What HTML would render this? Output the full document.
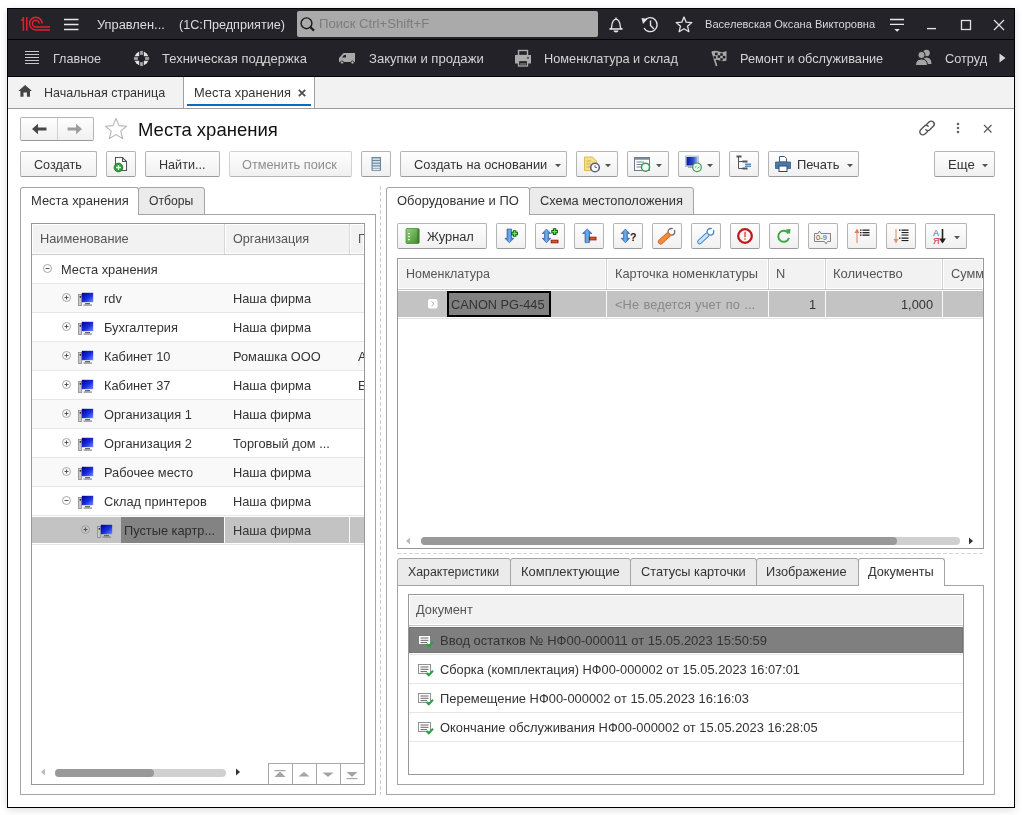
<!DOCTYPE html>
<html><head><meta charset="utf-8"><style>
html,body{margin:0;padding:0;width:1022px;height:815px;overflow:hidden;background:#fff;font-family:"Liberation Sans", sans-serif;}
div{position:absolute;box-sizing:border-box;}
.t{line-height:1;white-space:nowrap;will-change:transform;}
</style></head><body>
<div style="left:7px;top:8px;width:1008px;height:800px;border:1px solid #000;background:#fff;box-shadow:0 2px 8px rgba(0,0,0,0.13)"></div>
<div style="left:8px;top:9px;width:1006px;height:30px;background:#242329"></div>
<div style="left:8px;top:39px;width:1006px;height:1px;background:#050408"></div>
<div style="left:8px;top:40px;width:1006px;height:36px;background:#232228"></div>
<div style="left:8px;top:76px;width:1006px;height:1px;background:#050408"></div>
<div style="left:8px;top:77px;width:1006px;height:31px;background:#f2f2f2"></div>
<div style="left:8px;top:108px;width:1006px;height:1px;background:#9c9c9c"></div>
<div class="t" style="left:97px;top:19.00px;font-size:12.85px;color:#dcdcdc;">Управлен...</div>
<div class="t" style="left:179px;top:19.00px;font-size:12.65px;color:#dcdcdc;">(1С:Предприятие)</div>
<div style="left:297px;top:11px;width:301px;height:26px;background:#aaaaaa;border-radius:2px"></div>
<div class="t" style="left:319px;top:17.00px;font-size:13.15px;color:#7c7c7c;">Поиск Ctrl+Shift+F</div>
<div class="t" style="left:705px;top:19.00px;font-size:11.1px;color:#d8d8d8;">Васелевская Оксана Викторовна</div>
<div class="t" style="left:53px;top:53.00px;font-size:12.6px;color:#d4d4d4;">Главное</div>
<div class="t" style="left:162px;top:52.00px;font-size:13px;color:#d4d4d4;">Техническая поддержка</div>
<div class="t" style="left:369px;top:52.00px;font-size:13.1px;color:#d4d4d4;">Закупки и продажи</div>
<div class="t" style="left:544px;top:53.00px;font-size:12.75px;color:#d4d4d4;">Номенклатура и склад</div>
<div class="t" style="left:740px;top:53.00px;font-size:12.75px;color:#d4d4d4;">Ремонт и обслуживание</div>
<div class="t" style="left:945px;top:53.00px;font-size:12.75px;color:#d4d4d4;">Сотруд</div>
<div style="left:183px;top:77px;width:1px;height:31px;background:#a0a0a0"></div>
<div style="left:184px;top:77px;width:130px;height:31px;background:#fff"></div>
<div style="left:314px;top:77px;width:1px;height:31px;background:#a0a0a0"></div>
<div style="left:187px;top:104px;width:124px;height:2px;background:#0b6cbf"></div>
<div class="t" style="left:44px;top:87.00px;font-size:12.53px;color:#333;">Начальная страница</div>
<div class="t" style="left:194px;top:87.00px;font-size:12.84px;color:#333;">Места хранения</div>
<div style="left:20px;top:117px;width:74px;height:24px;border:1px solid #b4b4b4;border-bottom-color:#9a9a9a;border-radius:2px;background:linear-gradient(#fefefe,#f0f0f0);"></div>
<div style="left:57px;top:118px;width:1px;height:22px;background:#d0d0d0"></div>
<div class="t" style="left:138px;top:121.00px;font-size:18.5px;color:#111;">Места хранения</div>
<div style="left:20px;top:151px;width:77px;height:26px;border:1px solid #b4b4b4;border-bottom-color:#9a9a9a;border-radius:2px;background:linear-gradient(#fefefe,#f0f0f0);"></div>
<div class="t" style="left:34px;top:159.00px;font-size:12.6px;color:#333;">Создать</div>
<div style="left:106px;top:151px;width:30px;height:26px;border:1px solid #b4b4b4;border-bottom-color:#9a9a9a;border-radius:2px;background:linear-gradient(#fefefe,#f0f0f0);"></div>
<div style="left:145px;top:151px;width:75px;height:26px;border:1px solid #b4b4b4;border-bottom-color:#9a9a9a;border-radius:2px;background:linear-gradient(#fefefe,#f0f0f0);"></div>
<div class="t" style="left:159px;top:159.00px;font-size:12.6px;color:#333;">Найти...</div>
<div style="left:229px;top:151px;width:123px;height:26px;border:1px solid #b4b4b4;border-bottom-color:#9a9a9a;border-radius:2px;background:linear-gradient(#fefefe,#f0f0f0);border-color:#d2d2d2;border-bottom-color:#b4b4b4;"></div>
<div class="t" style="left:242px;top:159.00px;font-size:12.75px;color:#8e8e8e;">Отменить поиск</div>
<div style="left:361px;top:151px;width:30px;height:26px;border:1px solid #b4b4b4;border-bottom-color:#9a9a9a;border-radius:2px;background:linear-gradient(#fefefe,#f0f0f0);"></div>
<div style="left:400px;top:151px;width:167px;height:26px;border:1px solid #b4b4b4;border-bottom-color:#9a9a9a;border-radius:2px;background:linear-gradient(#fefefe,#f0f0f0);"></div>
<div class="t" style="left:414px;top:159.00px;font-size:12.85px;color:#333;">Создать на основании</div>
<svg style="position:absolute;left:555px;top:164px;" width="6" height="4" viewBox="0 0 6 4"><path d="M0 0H6L3 3.2Z" fill="#555"/></svg>
<div style="left:576px;top:151px;width:42px;height:26px;border:1px solid #b4b4b4;border-bottom-color:#9a9a9a;border-radius:2px;background:linear-gradient(#fefefe,#f0f0f0);"></div>
<svg style="position:absolute;left:605px;top:164px;" width="6" height="4" viewBox="0 0 6 4"><path d="M0 0H6L3 3.2Z" fill="#555"/></svg>
<div style="left:627px;top:151px;width:42px;height:26px;border:1px solid #b4b4b4;border-bottom-color:#9a9a9a;border-radius:2px;background:linear-gradient(#fefefe,#f0f0f0);"></div>
<svg style="position:absolute;left:656px;top:164px;" width="6" height="4" viewBox="0 0 6 4"><path d="M0 0H6L3 3.2Z" fill="#555"/></svg>
<div style="left:678px;top:151px;width:42px;height:26px;border:1px solid #b4b4b4;border-bottom-color:#9a9a9a;border-radius:2px;background:linear-gradient(#fefefe,#f0f0f0);"></div>
<svg style="position:absolute;left:707px;top:164px;" width="6" height="4" viewBox="0 0 6 4"><path d="M0 0H6L3 3.2Z" fill="#555"/></svg>
<div style="left:729px;top:151px;width:30px;height:26px;border:1px solid #b4b4b4;border-bottom-color:#9a9a9a;border-radius:2px;background:linear-gradient(#fefefe,#f0f0f0);"></div>
<div style="left:768px;top:151px;width:91px;height:26px;border:1px solid #b4b4b4;border-bottom-color:#9a9a9a;border-radius:2px;background:linear-gradient(#fefefe,#f0f0f0);"></div>
<div class="t" style="left:797px;top:159.00px;font-size:12.95px;color:#333;">Печать</div>
<svg style="position:absolute;left:847px;top:164px;" width="6" height="4" viewBox="0 0 6 4"><path d="M0 0H6L3 3.2Z" fill="#555"/></svg>
<div style="left:934px;top:151px;width:61px;height:26px;border:1px solid #b4b4b4;border-bottom-color:#9a9a9a;border-radius:2px;background:linear-gradient(#fefefe,#f0f0f0);"></div>
<div class="t" style="left:948px;top:158.00px;font-size:13.2px;color:#333;">Еще</div>
<svg style="position:absolute;left:982px;top:164px;" width="6" height="4" viewBox="0 0 6 4"><path d="M0 0H6L3 3.2Z" fill="#555"/></svg>
<div style="left:20px;top:214px;width:356px;height:581px;border:1px solid #a4a4a4;background:#fff"></div>
<div style="left:20px;top:187px;width:119px;height:28px;border:1px solid #a4a4a4;border-bottom:none;border-radius:3px 3px 0 0;background:#fff"></div>
<div style="left:138px;top:187px;width:67px;height:28px;border:1px solid #a4a4a4;border-radius:3px 3px 0 0;background:#ebebeb"></div>
<div class="t" style="left:31px;top:195.00px;font-size:12.95px;color:#333;">Места хранения</div>
<div class="t" style="left:149px;top:195.00px;font-size:12.2px;color:#333;">Отборы</div>
<div style="left:31px;top:223px;width:334px;height:562px;border:1px solid #989898;background:#fff"></div>
<div style="left:33px;top:225px;width:330px;height:28px;background:#f2f2f2"></div>
<div style="left:32px;top:254px;width:332px;height:1px;background:#c8c8c8"></div>
<div style="left:224px;top:224px;width:1px;height:30px;background:#d8d8d8"></div>
<div style="left:225px;top:224px;width:1px;height:30px;background:#fff"></div>
<div style="left:349px;top:224px;width:1px;height:30px;background:#d8d8d8"></div>
<div style="left:350px;top:224px;width:1px;height:30px;background:#fff"></div>
<div class="t" style="left:40px;top:233.00px;font-size:12.8px;color:#555;">Наименование</div>
<div class="t" style="left:233px;top:233.00px;font-size:12.62px;color:#555;">Организация</div>
<div class="t" style="left:358px;top:233.00px;font-size:12.5px;color:#555;width:6px;overflow:hidden;padding-bottom:4px;">Г</div>
<div style="left:32px;top:283px;width:332px;height:1px;background:#e6e6e6"></div>
<div class="t" style="left:61px;top:264.00px;font-size:12.8px;color:#333;">Места хранения</div>
<div style="left:32px;top:284px;width:332px;height:28px;background:#f9f9f9"></div>
<div style="left:32px;top:312px;width:332px;height:1px;background:#e6e6e6"></div>
<div class="t" style="left:104px;top:293.00px;font-size:12.8px;color:#333;">rdv</div>
<div class="t" style="left:233px;top:293.00px;font-size:12.8px;color:#333;">Наша фирма</div>
<div style="left:32px;top:341px;width:332px;height:1px;background:#e6e6e6"></div>
<div class="t" style="left:104px;top:322.00px;font-size:12.8px;color:#333;">Бухгалтерия</div>
<div class="t" style="left:233px;top:322.00px;font-size:12.8px;color:#333;">Наша фирма</div>
<div style="left:32px;top:342px;width:332px;height:28px;background:#f9f9f9"></div>
<div style="left:32px;top:370px;width:332px;height:1px;background:#e6e6e6"></div>
<div class="t" style="left:104px;top:351.00px;font-size:12.8px;color:#333;">Кабинет 10</div>
<div class="t" style="left:233px;top:351.00px;font-size:12.8px;color:#333;">Ромашка ООО</div>
<div class="t" style="left:358px;top:351.00px;font-size:12.8px;color:#333;width:6px;overflow:hidden;padding-bottom:4px;">А</div>
<div style="left:32px;top:399px;width:332px;height:1px;background:#e6e6e6"></div>
<div class="t" style="left:104px;top:380.00px;font-size:12.8px;color:#333;">Кабинет 37</div>
<div class="t" style="left:233px;top:380.00px;font-size:12.8px;color:#333;">Наша фирма</div>
<div class="t" style="left:358px;top:380.00px;font-size:12.8px;color:#333;width:6px;overflow:hidden;padding-bottom:4px;">Б</div>
<div style="left:32px;top:400px;width:332px;height:28px;background:#f9f9f9"></div>
<div style="left:32px;top:428px;width:332px;height:1px;background:#e6e6e6"></div>
<div class="t" style="left:104px;top:409.00px;font-size:12.8px;color:#333;">Организация 1</div>
<div class="t" style="left:233px;top:409.00px;font-size:12.8px;color:#333;">Наша фирма</div>
<div style="left:32px;top:457px;width:332px;height:1px;background:#e6e6e6"></div>
<div class="t" style="left:104px;top:438.00px;font-size:12.8px;color:#333;">Организация 2</div>
<div class="t" style="left:233px;top:438.00px;font-size:12.8px;color:#333;">Торговый дом ...</div>
<div style="left:32px;top:458px;width:332px;height:28px;background:#f9f9f9"></div>
<div style="left:32px;top:486px;width:332px;height:1px;background:#e6e6e6"></div>
<div class="t" style="left:104px;top:467.00px;font-size:12.8px;color:#333;">Рабочее место</div>
<div class="t" style="left:233px;top:467.00px;font-size:12.8px;color:#333;">Наша фирма</div>
<div style="left:32px;top:515px;width:332px;height:1px;background:#e6e6e6"></div>
<div class="t" style="left:104px;top:496.00px;font-size:12.8px;color:#333;">Склад принтеров</div>
<div class="t" style="left:233px;top:496.00px;font-size:12.8px;color:#333;">Наша фирма</div>
<div style="left:32px;top:517px;width:332px;height:26px;background:#c3c3c3"></div>
<div style="left:121px;top:517px;width:103px;height:26px;background:#838383"></div>
<div style="left:224px;top:517px;width:1px;height:26px;background:#fafafa"></div>
<div style="left:349px;top:517px;width:1px;height:26px;background:#fafafa"></div>
<div style="left:32px;top:544px;width:332px;height:1px;background:#e6e6e6"></div>
<div class="t" style="left:124px;top:525.00px;font-size:12.8px;color:#2e2e2e;">Пустые картр...</div>
<div class="t" style="left:233px;top:525.00px;font-size:12.8px;color:#333;">Наша фирма</div>
<div style="left:55px;top:769px;width:171px;height:8px;background:#d0d0d0;border-radius:4px"></div>
<div style="left:55px;top:769px;width:99px;height:8px;background:#999;border-radius:4px"></div>
<div style="left:268px;top:763px;width:97px;height:22px;border:1px solid #a8a8a8;border-bottom:none"></div>
<div style="left:292px;top:764px;width:1px;height:21px;background:#a8a8a8"></div>
<div style="left:316px;top:764px;width:1px;height:21px;background:#a8a8a8"></div>
<div style="left:340px;top:764px;width:1px;height:21px;background:#a8a8a8"></div>
<div style="left:380px;top:186px;width:1px;height:609px;background:repeating-linear-gradient(#cdcdcd 0 4px,transparent 4px 6px)"></div>
<div style="left:386px;top:214px;width:609px;height:581px;border:1px solid #a4a4a4;background:#fff"></div>
<div style="left:386px;top:187px;width:144px;height:28px;border:1px solid #a4a4a4;border-bottom:none;border-radius:3px 3px 0 0;background:#fff"></div>
<div style="left:529px;top:187px;width:165px;height:28px;border:1px solid #a4a4a4;border-radius:3px 3px 0 0;background:#ebebeb"></div>
<div class="t" style="left:397px;top:195.00px;font-size:12.95px;color:#333;">Оборудование и ПО</div>
<div class="t" style="left:540px;top:195.00px;font-size:12.85px;color:#333;">Схема местоположения</div>
<div style="left:397px;top:223px;width:90px;height:26px;border:1px solid #b4b4b4;border-bottom-color:#9a9a9a;border-radius:2px;background:linear-gradient(#fefefe,#f0f0f0);"></div>
<div class="t" style="left:427px;top:231.00px;font-size:12.85px;color:#333;">Журнал</div>
<div style="left:496px;top:223px;width:30px;height:26px;border:1px solid #b4b4b4;border-bottom-color:#9a9a9a;border-radius:2px;background:linear-gradient(#fefefe,#f0f0f0);"></div>
<div style="left:535px;top:223px;width:30px;height:26px;border:1px solid #b4b4b4;border-bottom-color:#9a9a9a;border-radius:2px;background:linear-gradient(#fefefe,#f0f0f0);"></div>
<div style="left:574px;top:223px;width:30px;height:26px;border:1px solid #b4b4b4;border-bottom-color:#9a9a9a;border-radius:2px;background:linear-gradient(#fefefe,#f0f0f0);"></div>
<div style="left:613px;top:223px;width:30px;height:26px;border:1px solid #b4b4b4;border-bottom-color:#9a9a9a;border-radius:2px;background:linear-gradient(#fefefe,#f0f0f0);"></div>
<div style="left:652px;top:223px;width:30px;height:26px;border:1px solid #b4b4b4;border-bottom-color:#9a9a9a;border-radius:2px;background:linear-gradient(#fefefe,#f0f0f0);"></div>
<div style="left:691px;top:223px;width:30px;height:26px;border:1px solid #b4b4b4;border-bottom-color:#9a9a9a;border-radius:2px;background:linear-gradient(#fefefe,#f0f0f0);"></div>
<div style="left:730px;top:223px;width:30px;height:26px;border:1px solid #b4b4b4;border-bottom-color:#9a9a9a;border-radius:2px;background:linear-gradient(#fefefe,#f0f0f0);"></div>
<div style="left:769px;top:223px;width:30px;height:26px;border:1px solid #b4b4b4;border-bottom-color:#9a9a9a;border-radius:2px;background:linear-gradient(#fefefe,#f0f0f0);"></div>
<div style="left:808px;top:223px;width:30px;height:26px;border:1px solid #b4b4b4;border-bottom-color:#9a9a9a;border-radius:2px;background:linear-gradient(#fefefe,#f0f0f0);"></div>
<div style="left:847px;top:223px;width:30px;height:26px;border:1px solid #b4b4b4;border-bottom-color:#9a9a9a;border-radius:2px;background:linear-gradient(#fefefe,#f0f0f0);"></div>
<div style="left:886px;top:223px;width:30px;height:26px;border:1px solid #b4b4b4;border-bottom-color:#9a9a9a;border-radius:2px;background:linear-gradient(#fefefe,#f0f0f0);"></div>
<div style="left:925px;top:223px;width:42px;height:26px;border:1px solid #b4b4b4;border-bottom-color:#9a9a9a;border-radius:2px;background:linear-gradient(#fefefe,#f0f0f0);"></div>
<svg style="position:absolute;left:954px;top:236px;" width="6" height="4" viewBox="0 0 6 4"><path d="M0 0H6L3 3.2Z" fill="#555"/></svg>
<div style="left:397px;top:258px;width:587px;height:291px;border:1px solid #989898;background:#fff"></div>
<div style="left:399px;top:260px;width:583px;height:28px;background:#f2f2f2"></div>
<div style="left:398px;top:289px;width:585px;height:1px;background:#c8c8c8"></div>
<div style="left:605px;top:259px;width:1px;height:30px;background:#fff"></div>
<div style="left:606px;top:259px;width:1px;height:30px;background:#d0d0d0"></div>
<div style="left:607px;top:259px;width:1px;height:30px;background:#fff"></div>
<div style="left:767px;top:259px;width:1px;height:30px;background:#fff"></div>
<div style="left:768px;top:259px;width:1px;height:30px;background:#d0d0d0"></div>
<div style="left:769px;top:259px;width:1px;height:30px;background:#fff"></div>
<div style="left:824px;top:259px;width:1px;height:30px;background:#fff"></div>
<div style="left:825px;top:259px;width:1px;height:30px;background:#d0d0d0"></div>
<div style="left:826px;top:259px;width:1px;height:30px;background:#fff"></div>
<div style="left:941px;top:259px;width:1px;height:30px;background:#fff"></div>
<div style="left:942px;top:259px;width:1px;height:30px;background:#d0d0d0"></div>
<div style="left:943px;top:259px;width:1px;height:30px;background:#fff"></div>
<div style="left:398px;top:318px;width:585px;height:1px;background:#e4e4e4"></div>
<div class="t" style="left:406px;top:268.00px;font-size:12.5px;color:#555;">Номенклатура</div>
<div class="t" style="left:615px;top:268.00px;font-size:12.8px;color:#555;">Карточка номенклатуры</div>
<div class="t" style="left:776px;top:268.00px;font-size:12.8px;color:#555;">N</div>
<div class="t" style="left:833px;top:267.00px;font-size:13.0px;color:#555;">Количество</div>
<div class="t" style="left:951px;top:268.00px;font-size:12.8px;color:#555;width:32px;overflow:hidden;padding-bottom:4px;">Сумм</div>
<div style="left:398px;top:291px;width:585px;height:26px;background:#c3c3c3"></div>
<div style="left:606px;top:291px;width:1px;height:26px;background:#fafafa"></div>
<div style="left:768px;top:291px;width:1px;height:26px;background:#fafafa"></div>
<div style="left:825px;top:291px;width:1px;height:26px;background:#fafafa"></div>
<div style="left:942px;top:291px;width:1px;height:26px;background:#fafafa"></div>
<div style="left:447px;top:291px;width:104px;height:26px;border:2px solid #000;background:#818181"></div>
<div class="t" style="left:451px;top:299.00px;font-size:12.75px;color:#333;">CANON PG-445</div>
<div class="t" style="left:615px;top:299.00px;font-size:12.8px;color:#888;word-spacing:0.6px;letter-spacing:0.12px;">&lt;Не ведется учет по ...</div>
<div class="t" style="right:206px;top:299.00px;font-size:12.8px;color:#333;">1</div>
<div class="t" style="right:89px;top:299.00px;font-size:12.8px;color:#333;">1,000</div>
<div style="left:421px;top:537px;width:539px;height:8px;background:#d0d0d0;border-radius:4px"></div>
<div style="left:421px;top:537px;width:476px;height:8px;background:#999;border-radius:4px"></div>
<div style="left:397px;top:553px;width:586px;height:1px;background:repeating-linear-gradient(90deg,#d4d4d4 0 4px,transparent 4px 6px)"></div>
<div style="left:397px;top:585px;width:587px;height:200px;border:1px solid #a4a4a4;background:#fff"></div>
<div style="left:397px;top:558px;width:114px;height:28px;border:1px solid #a4a4a4;border-radius:3px 3px 0 0;background:#ebebeb"></div>
<div class="t" style="left:408px;top:566.00px;font-size:12.3px;color:#333;">Характеристики</div>
<div style="left:510px;top:558px;width:121px;height:28px;border:1px solid #a4a4a4;border-radius:3px 3px 0 0;background:#ebebeb"></div>
<div class="t" style="left:521px;top:566.00px;font-size:12.97px;color:#333;">Комплектующие</div>
<div style="left:630px;top:558px;width:127px;height:28px;border:1px solid #a4a4a4;border-radius:3px 3px 0 0;background:#ebebeb"></div>
<div class="t" style="left:641px;top:566.00px;font-size:12.78px;color:#333;">Статусы карточки</div>
<div style="left:756px;top:558px;width:103px;height:28px;border:1px solid #a4a4a4;border-radius:3px 3px 0 0;background:#ebebeb"></div>
<div class="t" style="left:766px;top:566.00px;font-size:12.8px;color:#333;">Изображение</div>
<div style="left:858px;top:558px;width:87px;height:28px;border:1px solid #a4a4a4;border-bottom:none;border-radius:3px 3px 0 0;background:#fff"></div>
<div class="t" style="left:868px;top:566.00px;font-size:12.75px;color:#333;">Документы</div>
<div style="left:408px;top:594px;width:556px;height:181px;border:1px solid #989898;background:#fff"></div>
<div style="left:410px;top:596px;width:552px;height:28px;background:#f2f2f2"></div>
<div style="left:409px;top:625px;width:554px;height:1px;background:#c8c8c8"></div>
<div class="t" style="left:416px;top:604.00px;font-size:12.8px;color:#555;">Документ</div>
<div style="left:409px;top:627px;width:554px;height:26px;background:#7f7f7f;border:1px solid #747474"></div>
<div style="left:409px;top:654px;width:554px;height:1px;background:#e6e6e6"></div>
<div class="t" style="left:440px;top:634.00px;font-size:13.0px;color:#333;">Ввод остатков № НФ00-000011 от 15.05.2023 15:50:59</div>
<div style="left:409px;top:683px;width:554px;height:1px;background:#e6e6e6"></div>
<div class="t" style="left:440px;top:664.00px;font-size:12.8px;color:#333;">Сборка (комплектация) НФ00-000002 от 15.05.2023 16:07:01</div>
<div style="left:409px;top:712px;width:554px;height:1px;background:#e6e6e6"></div>
<div class="t" style="left:440px;top:693.00px;font-size:12.92px;color:#333;">Перемещение НФ00-000002 от 15.05.2023 16:16:03</div>
<div style="left:409px;top:741px;width:554px;height:1px;background:#e6e6e6"></div>
<div class="t" style="left:440px;top:722.00px;font-size:12.9px;color:#333;">Окончание обслуживания НФ00-000002 от 15.05.2023 16:28:05</div>
<svg style="position:absolute;left:14px;top:12px;" width="40" height="24" viewBox="0 0 40 24"><g fill="none" stroke="#e3202f" stroke-width="1.5">
<path d="M9.4 5 V18.8"/><path d="M12.8 5 V18.8"/><path d="M7.3 8.6 L9.4 6.8"/>
<path d="M28.1 11.6 A6.3 6.3 0 1 0 21.8 17.9 H36"/>
<path d="M25.2 11.6 A3.4 3.4 0 1 0 21.8 15 H36"/>
</g></svg>
<svg style="position:absolute;left:62px;top:16px;" width="18" height="16" viewBox="0 0 18 16"><g stroke="#e6e6e6" stroke-width="1.5"><path d="M2 3.5H16.5M2 8.5H16.5M2 13.5H16.5"/></g></svg>
<svg style="position:absolute;left:298px;top:16px;" width="20" height="18" viewBox="0 0 20 18"><g fill="none" stroke="#1a1a1a" stroke-width="1.4"><circle cx="8.5" cy="7.3" r="5.4"/><path d="M12.5 11.3 L16 14.6" stroke-width="2.2"/></g></svg>
<svg style="position:absolute;left:606px;top:15px;" width="20" height="19" viewBox="0 0 20 19"><g fill="none" stroke="#e4e4e4" stroke-width="1.3">
<path d="M10 2.5 V4"/><path d="M5.5 13 C6 10 5.5 5 10 4.2 C14.5 5 14 10 14.5 13 L16.5 14 H3.5 Z"/>
</g><path d="M7.5 15.5 A2.5 2 0 0 0 12.5 15.5 Z" fill="#e4e4e4"/></svg>
<svg style="position:absolute;left:640px;top:15px;" width="22" height="19" viewBox="0 0 22 19"><g fill="none" stroke="#e4e4e4" stroke-width="1.4">
<path d="M4.5 5.5 A7 7 0 1 1 4 13"/><path d="M10.5 5.5 V10.5 L14 14"/></g>
<path d="M1.5 3 L7.5 4 L3 9 Z" fill="#e4e4e4"/></svg>
<svg style="position:absolute;left:674px;top:15px;" width="20" height="19" viewBox="0 0 20 19"><path d="M10 2 L12.2 7.2 L17.8 7.6 L13.5 11.2 L14.9 16.7 L10 13.8 L5.1 16.7 L6.5 11.2 L2.2 7.6 L7.8 7.2 Z" fill="none" stroke="#e4e4e4" stroke-width="1.3" stroke-linejoin="round"/></svg>
<svg style="position:absolute;left:888px;top:16px;" width="18" height="18" viewBox="0 0 18 18"><g stroke="#e8e8e8" stroke-width="1.4"><path d="M2 3.5H16M2 8.4H16"/></g><path d="M6.3 13 H11.9 L9.1 15.7Z" fill="#e8e8e8"/></svg>
<svg style="position:absolute;left:925px;top:27px;" width="13" height="3" viewBox="0 0 13 3"><path d="M2 1.6H11" stroke="#e0e0e0" stroke-width="1.4"/></svg>
<svg style="position:absolute;left:959px;top:18px;" width="14" height="14" viewBox="0 0 14 14"><rect x="2.5" y="2.5" width="9" height="9" fill="none" stroke="#e0e0e0" stroke-width="1.3"/></svg>
<svg style="position:absolute;left:992px;top:18px;" width="14" height="14" viewBox="0 0 14 14"><path d="M2 2 L12 12 M12 2 L2 12" stroke="#e0e0e0" stroke-width="1.3"/></svg>
<svg style="position:absolute;left:22px;top:49px;" width="20" height="18" viewBox="0 0 20 18"><g stroke="#c8c8c8" stroke-width="1.1"><path d="M3 2.5H17M3 5.5H17M3 8.5H17M3 11.5H17M3 14.5H17"/></g></svg>
<svg style="position:absolute;left:132px;top:49px;" width="20" height="20" viewBox="0 0 20 20"><circle cx="9.5" cy="9.5" r="7.2" fill="#e2e2e2"/>
<path d="M9.5 1 V18 M1 9.5 H18" stroke="#232228" stroke-width="4.6"/>
<circle cx="9.5" cy="9.5" r="3" fill="#232228"/>
<rect x="8.1" y="1.9" width="2.8" height="4" fill="#a4a4a4"/><rect x="8.1" y="13.1" width="2.8" height="4" fill="#a4a4a4"/>
<rect x="1.9" y="8.1" width="4" height="2.8" fill="#a4a4a4"/><rect x="13.1" y="8.1" width="4" height="2.8" fill="#a4a4a4"/></svg>
<svg style="position:absolute;left:336px;top:48px;" width="22" height="18" viewBox="0 0 22 18"><path d="M3 14 V10 L7.5 5 H19 V14 Z" fill="#a9a9a9"/>
<path d="M6 9.5 L8 7 H10 V9.5 Z" fill="#232228"/>
<circle cx="6" cy="14.5" r="1.6" fill="#a9a9a9" stroke="#232228" stroke-width="0.8"/><circle cx="16.5" cy="14.5" r="1.6" fill="#a9a9a9" stroke="#232228" stroke-width="0.8"/></svg>
<svg style="position:absolute;left:512px;top:48px;" width="22" height="20" viewBox="0 0 22 20"><rect x="6.5" y="2.5" width="9" height="5" fill="none" stroke="#ababab" stroke-width="1.4"/>
<path d="M3 7 H19 V15.5 H3 Z" fill="#ababab"/>
<rect x="6.5" y="12.5" width="9" height="5.5" fill="#232228" stroke="#ababab" stroke-width="1.3"/>
<path d="M8 16 H14" stroke="#ababab" stroke-width="0.9"/>
<circle cx="16" cy="9.8" r="0.9" fill="#232228"/></svg>
<svg style="position:absolute;left:709px;top:48px;" width="20" height="21" viewBox="0 0 20 21"><path d="M3 3.5 Q6.5 2 10 3.5 T17.5 3 V12.5 Q14 14 10.5 12.5 T5.8 12.8 Z" fill="#a8a8a8"/>
<path d="M3.2 3.5 L7.6 18" stroke="#a8a8a8" stroke-width="1.7"/>
<g fill="#232228"><rect x="6" y="4.6" width="2.6" height="2.6"/><rect x="11.2" y="5.2" width="2.6" height="2.6"/>
<rect x="8.6" y="7.3" width="2.6" height="2.6"/><rect x="13.8" y="7.9" width="2.6" height="2.6"/>
<rect x="4.6" y="8.2" width="2.4" height="2.4"/><rect x="11.2" y="10.3" width="2.6" height="2.4"/></g></svg>
<svg style="position:absolute;left:914px;top:48px;" width="20" height="19" viewBox="0 0 20 19"><g fill="#a4a4a4"><circle cx="12.5" cy="5" r="3.3"/><path d="M8 16 Q8 9.5 12.5 9.5 Q17.5 9.5 17.5 16 Z"/></g>
<g fill="#a4a4a4" stroke="#232228" stroke-width="1"><circle cx="7.5" cy="7" r="3.6"/><path d="M1.5 17.5 Q1.5 11 7.5 11 Q13.5 11 13.5 17.5 Z"/></g></svg>
<svg style="position:absolute;left:998px;top:52px;" width="9" height="12" viewBox="0 0 9 12"><path d="M1.5 1.5 L7.5 6 L1.5 10.5Z" fill="#d8d8d8"/></svg>
<svg style="position:absolute;left:18px;top:84px;" width="16" height="14" viewBox="0 0 16 14"><path d="M7.1 1 L14 7 H12 V12.8 H8.9 V8.6 H5.5 V12.8 H2.4 V7 H0.4 Z" fill="#444"/></svg>
<svg style="position:absolute;left:297px;top:88px;" width="10" height="10" viewBox="0 0 10 10"><path d="M1.8 1.8 L8.2 8.2 M8.2 1.8 L1.8 8.2" stroke="#4a4a4a" stroke-width="1.7"/></svg>
<svg style="position:absolute;left:30px;top:122px;" width="18" height="14" viewBox="0 0 18 14"><path d="M2 7 L8 1.8 V5.5 H16.5 V8.5 H8 V12.2 Z" fill="#474747"/></svg>
<svg style="position:absolute;left:66px;top:122px;" width="18" height="14" viewBox="0 0 18 14"><path d="M16 7 L10 1.8 V5.5 H1.5 V8.5 H10 V12.2 Z" fill="#9d9d9d"/></svg>
<svg style="position:absolute;left:102px;top:116px;" width="28" height="26" viewBox="0 0 28 26"><path d="M14 2.5 L17 9.6 L24.6 10.2 L18.8 15.2 L20.6 22.6 L14 18.6 L7.4 22.6 L9.2 15.2 L3.4 10.2 L11 9.6 Z" fill="none" stroke="#b4b4b4" stroke-width="1.1" stroke-linejoin="round"/></svg>
<svg style="position:absolute;left:916px;top:118px;" width="22" height="20" viewBox="0 0 22 20"><g fill="none" stroke="#555" stroke-width="1.4" stroke-linecap="round">
<path d="M10.5 6.5 L13 4 A3 3 0 0 1 17.3 8.3 L14 11.6 A3 3 0 0 1 9.8 11.8"/>
<path d="M11.5 13.5 L9 16 A3 3 0 0 1 4.7 11.7 L8 8.4 A3 3 0 0 1 12.2 8.2"/></g></svg>
<svg style="position:absolute;left:954px;top:120px;" width="8" height="16" viewBox="0 0 8 16"><g fill="#666"><circle cx="4" cy="4" r="1.3"/><circle cx="4" cy="8" r="1.3"/><circle cx="4" cy="12" r="1.3"/></g></svg>
<svg style="position:absolute;left:981px;top:122px;" width="14" height="14" viewBox="0 0 14 14"><path d="M3 3 L10.5 10.5 M10.5 3 L3 10.5" stroke="#555" stroke-width="1.1"/></svg>
<svg style="position:absolute;left:110px;top:154px;" width="22" height="20" viewBox="0 0 22 20"><path d="M5.5 3.5 H12.5 L16.5 7.5 V16.5 H5.5 Z" fill="#fff" stroke="#555" stroke-width="1.1"/>
<path d="M12.5 3.5 V7.5 H16.5" fill="none" stroke="#555" stroke-width="1.1"/>
<circle cx="8.5" cy="13.5" r="4.4" fill="#2f9a3a" stroke="#1f7a2a" stroke-width="0.8"/>
<path d="M8.5 11 V16 M6 13.5 H11" stroke="#e6ffe6" stroke-width="1.4"/></svg>
<svg style="position:absolute;left:366px;top:154px;" width="20" height="20" viewBox="0 0 20 20"><rect x="5.5" y="3" width="9.5" height="13.8" fill="#6d8598"/>
<g fill="#cfe4f4"><rect x="6.6" y="4.3" width="7.3" height="1.6"/><rect x="6.6" y="7" width="7.3" height="1.6"/><rect x="6.6" y="9.7" width="7.3" height="1.6"/><rect x="6.6" y="12.4" width="7.3" height="1.6"/><rect x="6.6" y="14.6" width="7.3" height="1.3" fill="#f0f8ff"/></g></svg>
<svg style="position:absolute;left:582px;top:154px;" width="20" height="20" viewBox="0 0 20 20"><path d="M2.5 3 H10.5 L14.5 7 V16.5 H2.5 Z" fill="#f3e08a" stroke="#d8b84a" stroke-width="0.9"/>
<g stroke="#c8a840" stroke-width="0.9"><path d="M4.5 7H9M4.5 10H9M4.5 13H8"/></g>
<circle cx="13" cy="13.5" r="4.3" fill="#fff" stroke="#58608a" stroke-width="1.6"/>
<path d="M13 11V13.5H15" stroke="#58608a" stroke-width="0.9" fill="none"/></svg>
<svg style="position:absolute;left:632px;top:154px;" width="22" height="20" viewBox="0 0 22 20"><rect x="2.5" y="3.5" width="15" height="13" fill="#fff" stroke="#6a7888" stroke-width="1"/>
<rect x="2.5" y="3.5" width="15" height="2.2" fill="#7a8898"/>
<g stroke="#5a7a9a" stroke-width="0.9"><path d="M4.5 8H12M4.5 10.5H11M4.5 13H10"/></g>
<circle cx="13.5" cy="13.2" r="4" fill="#fff" stroke="#3a9a5a" stroke-width="1.5"/></svg>
<svg style="position:absolute;left:684px;top:154px;" width="22" height="20" viewBox="0 0 22 20"><defs><linearGradient id="mon3" x1="0" y1="0" x2="1" y2="0"><stop offset="0" stop-color="#0a1a9a"/><stop offset="0.6" stop-color="#2a4ad0"/><stop offset="1" stop-color="#9ab4f0"/></linearGradient></defs>
<rect x="1.5" y="2" width="13" height="10.5" fill="#d8e4f0" stroke="#9aaabb" stroke-width="0.6"/>
<rect x="2.5" y="3" width="11" height="8.5" fill="url(#mon3)"/>
<rect x="4" y="12.5" width="6" height="1.5" fill="#aab"/>
<circle cx="13" cy="13.3" r="4.3" fill="#eef8ee" stroke="#3a9a4a" stroke-width="1.2"/>
<path d="M10.8 13.6 L12.6 12.2 M15.2 13 L13.4 14.4" stroke="#3a9a4a" stroke-width="0.9"/></svg>
<svg style="position:absolute;left:734px;top:153px;" width="20" height="20" viewBox="0 0 20 20"><g stroke="#555" stroke-width="1" fill="none"><path d="M4.5 4 V15.5 H9 M4.5 8.5 H9"/></g>
<rect x="2.5" y="2.5" width="5" height="2" fill="#555"/>
<rect x="8.5" y="7.5" width="5" height="2" fill="#555"/><rect x="8.5" y="14.5" width="5" height="2" fill="#555"/>
<g fill="#5a8ab8"><rect x="11" y="10.5" width="6" height="1.6"/><rect x="11" y="12.6" width="6" height="1.4"/></g></svg>
<svg style="position:absolute;left:773px;top:154px;" width="20" height="20" viewBox="0 0 20 20"><path d="M6.5 2.5 H11.5 L13.5 4.5 V8 H6.5 Z" fill="#fff" stroke="#3a5a80" stroke-width="1"/>
<path d="M2.5 8 H17.5 V14.5 H2.5 Z" fill="#4a78aa" stroke="#3a5a80" stroke-width="0.8"/>
<rect x="6" y="12" width="8" height="5.5" fill="#fff" stroke="#2a4a70" stroke-width="1"/></svg>
<svg style="position:absolute;left:43px;top:264px;" width="9" height="9" viewBox="0 0 9 9"><circle cx="4.5" cy="4.5" r="4" fill="none" stroke="#9c9c9c" stroke-width="0.9"/><path d="M2.5 4.5H6.5" stroke="#555" stroke-width="1"/></svg>
<svg style="position:absolute;left:62px;top:293px;" width="9" height="9" viewBox="0 0 9 9"><circle cx="4.5" cy="4.5" r="4" fill="none" stroke="#9c9c9c" stroke-width="0.9"/><path d="M2.5 4.5H6.5" stroke="#555" stroke-width="1"/><path d="M4.5 2.5V6.5" stroke="#555" stroke-width="1"/></svg>
<svg style="position:absolute;left:78px;top:292.0px;" width="17" height="15" viewBox="0 0 17 15"><defs><linearGradient id="mg" x1="0" y1="0" x2="1" y2="1"><stop offset="0" stop-color="#00008a"/><stop offset="0.55" stop-color="#1a2ee0"/><stop offset="1" stop-color="#6a8cff"/></linearGradient></defs>
<rect x="0.5" y="2.5" width="3.2" height="11" fill="#c8c8c8" stroke="#8a8a8a" stroke-width="0.8"/>
<circle cx="2.4" cy="4.8" r="0.9" fill="#222"/>
<rect x="3.8" y="0.8" width="11.4" height="9.4" fill="url(#mg)"/>
<rect x="7" y="11" width="5" height="1.4" fill="#666"/><rect x="5.5" y="12.5" width="8.5" height="1.2" fill="#888"/></svg>
<svg style="position:absolute;left:62px;top:322px;" width="9" height="9" viewBox="0 0 9 9"><circle cx="4.5" cy="4.5" r="4" fill="none" stroke="#9c9c9c" stroke-width="0.9"/><path d="M2.5 4.5H6.5" stroke="#555" stroke-width="1"/><path d="M4.5 2.5V6.5" stroke="#555" stroke-width="1"/></svg>
<svg style="position:absolute;left:78px;top:321.0px;" width="17" height="15" viewBox="0 0 17 15"><defs><linearGradient id="mg" x1="0" y1="0" x2="1" y2="1"><stop offset="0" stop-color="#00008a"/><stop offset="0.55" stop-color="#1a2ee0"/><stop offset="1" stop-color="#6a8cff"/></linearGradient></defs>
<rect x="0.5" y="2.5" width="3.2" height="11" fill="#c8c8c8" stroke="#8a8a8a" stroke-width="0.8"/>
<circle cx="2.4" cy="4.8" r="0.9" fill="#222"/>
<rect x="3.8" y="0.8" width="11.4" height="9.4" fill="url(#mg)"/>
<rect x="7" y="11" width="5" height="1.4" fill="#666"/><rect x="5.5" y="12.5" width="8.5" height="1.2" fill="#888"/></svg>
<svg style="position:absolute;left:62px;top:351px;" width="9" height="9" viewBox="0 0 9 9"><circle cx="4.5" cy="4.5" r="4" fill="none" stroke="#9c9c9c" stroke-width="0.9"/><path d="M2.5 4.5H6.5" stroke="#555" stroke-width="1"/><path d="M4.5 2.5V6.5" stroke="#555" stroke-width="1"/></svg>
<svg style="position:absolute;left:78px;top:350.0px;" width="17" height="15" viewBox="0 0 17 15"><defs><linearGradient id="mg" x1="0" y1="0" x2="1" y2="1"><stop offset="0" stop-color="#00008a"/><stop offset="0.55" stop-color="#1a2ee0"/><stop offset="1" stop-color="#6a8cff"/></linearGradient></defs>
<rect x="0.5" y="2.5" width="3.2" height="11" fill="#c8c8c8" stroke="#8a8a8a" stroke-width="0.8"/>
<circle cx="2.4" cy="4.8" r="0.9" fill="#222"/>
<rect x="3.8" y="0.8" width="11.4" height="9.4" fill="url(#mg)"/>
<rect x="7" y="11" width="5" height="1.4" fill="#666"/><rect x="5.5" y="12.5" width="8.5" height="1.2" fill="#888"/></svg>
<svg style="position:absolute;left:62px;top:380px;" width="9" height="9" viewBox="0 0 9 9"><circle cx="4.5" cy="4.5" r="4" fill="none" stroke="#9c9c9c" stroke-width="0.9"/><path d="M2.5 4.5H6.5" stroke="#555" stroke-width="1"/><path d="M4.5 2.5V6.5" stroke="#555" stroke-width="1"/></svg>
<svg style="position:absolute;left:78px;top:379.0px;" width="17" height="15" viewBox="0 0 17 15"><defs><linearGradient id="mg" x1="0" y1="0" x2="1" y2="1"><stop offset="0" stop-color="#00008a"/><stop offset="0.55" stop-color="#1a2ee0"/><stop offset="1" stop-color="#6a8cff"/></linearGradient></defs>
<rect x="0.5" y="2.5" width="3.2" height="11" fill="#c8c8c8" stroke="#8a8a8a" stroke-width="0.8"/>
<circle cx="2.4" cy="4.8" r="0.9" fill="#222"/>
<rect x="3.8" y="0.8" width="11.4" height="9.4" fill="url(#mg)"/>
<rect x="7" y="11" width="5" height="1.4" fill="#666"/><rect x="5.5" y="12.5" width="8.5" height="1.2" fill="#888"/></svg>
<svg style="position:absolute;left:62px;top:409px;" width="9" height="9" viewBox="0 0 9 9"><circle cx="4.5" cy="4.5" r="4" fill="none" stroke="#9c9c9c" stroke-width="0.9"/><path d="M2.5 4.5H6.5" stroke="#555" stroke-width="1"/><path d="M4.5 2.5V6.5" stroke="#555" stroke-width="1"/></svg>
<svg style="position:absolute;left:78px;top:408.0px;" width="17" height="15" viewBox="0 0 17 15"><defs><linearGradient id="mg" x1="0" y1="0" x2="1" y2="1"><stop offset="0" stop-color="#00008a"/><stop offset="0.55" stop-color="#1a2ee0"/><stop offset="1" stop-color="#6a8cff"/></linearGradient></defs>
<rect x="0.5" y="2.5" width="3.2" height="11" fill="#c8c8c8" stroke="#8a8a8a" stroke-width="0.8"/>
<circle cx="2.4" cy="4.8" r="0.9" fill="#222"/>
<rect x="3.8" y="0.8" width="11.4" height="9.4" fill="url(#mg)"/>
<rect x="7" y="11" width="5" height="1.4" fill="#666"/><rect x="5.5" y="12.5" width="8.5" height="1.2" fill="#888"/></svg>
<svg style="position:absolute;left:62px;top:438px;" width="9" height="9" viewBox="0 0 9 9"><circle cx="4.5" cy="4.5" r="4" fill="none" stroke="#9c9c9c" stroke-width="0.9"/><path d="M2.5 4.5H6.5" stroke="#555" stroke-width="1"/><path d="M4.5 2.5V6.5" stroke="#555" stroke-width="1"/></svg>
<svg style="position:absolute;left:78px;top:437.0px;" width="17" height="15" viewBox="0 0 17 15"><defs><linearGradient id="mg" x1="0" y1="0" x2="1" y2="1"><stop offset="0" stop-color="#00008a"/><stop offset="0.55" stop-color="#1a2ee0"/><stop offset="1" stop-color="#6a8cff"/></linearGradient></defs>
<rect x="0.5" y="2.5" width="3.2" height="11" fill="#c8c8c8" stroke="#8a8a8a" stroke-width="0.8"/>
<circle cx="2.4" cy="4.8" r="0.9" fill="#222"/>
<rect x="3.8" y="0.8" width="11.4" height="9.4" fill="url(#mg)"/>
<rect x="7" y="11" width="5" height="1.4" fill="#666"/><rect x="5.5" y="12.5" width="8.5" height="1.2" fill="#888"/></svg>
<svg style="position:absolute;left:62px;top:467px;" width="9" height="9" viewBox="0 0 9 9"><circle cx="4.5" cy="4.5" r="4" fill="none" stroke="#9c9c9c" stroke-width="0.9"/><path d="M2.5 4.5H6.5" stroke="#555" stroke-width="1"/><path d="M4.5 2.5V6.5" stroke="#555" stroke-width="1"/></svg>
<svg style="position:absolute;left:78px;top:466.0px;" width="17" height="15" viewBox="0 0 17 15"><defs><linearGradient id="mg" x1="0" y1="0" x2="1" y2="1"><stop offset="0" stop-color="#00008a"/><stop offset="0.55" stop-color="#1a2ee0"/><stop offset="1" stop-color="#6a8cff"/></linearGradient></defs>
<rect x="0.5" y="2.5" width="3.2" height="11" fill="#c8c8c8" stroke="#8a8a8a" stroke-width="0.8"/>
<circle cx="2.4" cy="4.8" r="0.9" fill="#222"/>
<rect x="3.8" y="0.8" width="11.4" height="9.4" fill="url(#mg)"/>
<rect x="7" y="11" width="5" height="1.4" fill="#666"/><rect x="5.5" y="12.5" width="8.5" height="1.2" fill="#888"/></svg>
<svg style="position:absolute;left:62px;top:496px;" width="9" height="9" viewBox="0 0 9 9"><circle cx="4.5" cy="4.5" r="4" fill="none" stroke="#9c9c9c" stroke-width="0.9"/><path d="M2.5 4.5H6.5" stroke="#555" stroke-width="1"/></svg>
<svg style="position:absolute;left:78px;top:495.0px;" width="17" height="15" viewBox="0 0 17 15"><defs><linearGradient id="mg" x1="0" y1="0" x2="1" y2="1"><stop offset="0" stop-color="#00008a"/><stop offset="0.55" stop-color="#1a2ee0"/><stop offset="1" stop-color="#6a8cff"/></linearGradient></defs>
<rect x="0.5" y="2.5" width="3.2" height="11" fill="#c8c8c8" stroke="#8a8a8a" stroke-width="0.8"/>
<circle cx="2.4" cy="4.8" r="0.9" fill="#222"/>
<rect x="3.8" y="0.8" width="11.4" height="9.4" fill="url(#mg)"/>
<rect x="7" y="11" width="5" height="1.4" fill="#666"/><rect x="5.5" y="12.5" width="8.5" height="1.2" fill="#888"/></svg>
<svg style="position:absolute;left:81px;top:525px;" width="9" height="9" viewBox="0 0 9 9"><circle cx="4.5" cy="4.5" r="4" fill="none" stroke="#9c9c9c" stroke-width="0.9"/><path d="M2.5 4.5H6.5" stroke="#555" stroke-width="1"/><path d="M4.5 2.5V6.5" stroke="#555" stroke-width="1"/></svg>
<svg style="position:absolute;left:97px;top:524px;" width="17" height="15" viewBox="0 0 17 15"><defs><linearGradient id="mg" x1="0" y1="0" x2="1" y2="1"><stop offset="0" stop-color="#00008a"/><stop offset="0.55" stop-color="#1a2ee0"/><stop offset="1" stop-color="#6a8cff"/></linearGradient></defs>
<rect x="0.5" y="2.5" width="3.2" height="11" fill="#c8c8c8" stroke="#8a8a8a" stroke-width="0.8"/>
<circle cx="2.4" cy="4.8" r="0.9" fill="#222"/>
<rect x="3.8" y="0.8" width="11.4" height="9.4" fill="url(#mg)"/>
<rect x="7" y="11" width="5" height="1.4" fill="#666"/><rect x="5.5" y="12.5" width="8.5" height="1.2" fill="#888"/></svg>
<svg style="position:absolute;left:40px;top:768px;" width="6" height="8" viewBox="0 0 6 8"><path d="M5 0.5 L1 4 L5 7.5Z" fill="#bbb"/></svg>
<svg style="position:absolute;left:235px;top:768px;" width="6" height="8" viewBox="0 0 6 8"><path d="M1 0.5 L5 4 L1 7.5Z" fill="#333"/></svg>
<svg style="position:absolute;left:268px;top:764px;" width="97" height="21" viewBox="0 0 97 21"><g fill="#a4a4a4">
<path d="M6.5 13 L12 7.5 L17.5 13Z"/><rect x="6.5" y="6" width="11" height="1.2"/>
<path d="M30.5 12.5 L36 8 L41.5 12.5Z"/>
<path d="M54.5 8.5 L60 13 L65.5 8.5Z"/>
<path d="M78.5 8 L84 13 L89.5 8Z"/><rect x="78.5" y="14" width="11" height="1.2"/>
</g></svg>
<svg style="position:absolute;left:403px;top:226px;" width="20" height="20" viewBox="0 0 20 20"><defs><linearGradient id="jg" x1="0" y1="0" x2="1" y2="1"><stop offset="0" stop-color="#9ad27a"/><stop offset="1" stop-color="#3f8a2a"/></linearGradient></defs>
<rect x="3" y="2.5" width="13" height="15" rx="1" fill="url(#jg)" stroke="#4a8a3a" stroke-width="0.8"/>
<rect x="14" y="3" width="2.5" height="14" fill="#2f6a20" opacity="0.5"/>
<g fill="#e8f4e0"><rect x="5" y="7" width="2" height="1.2"/><rect x="5" y="10" width="2" height="1.2"/><rect x="5" y="13" width="2" height="1.2"/></g></svg>
<svg style="position:absolute;left:490px;top:220px;" width="160" height="30" viewBox="0 0 160 30"><defs><linearGradient id="bg1" x1="0" y1="0" x2="1" y2="0"><stop offset="0" stop-color="#2f64b8"/><stop offset="0.5" stop-color="#6fb0f0"/><stop offset="1" stop-color="#2a5aa8"/></linearGradient></defs><path d="M17.00 9.00 L21.60 9.00 L21.60 18.30 L23.90 18.30 L19.30 22.80 L14.90 18.30 L17.00 18.30 Z" fill="url(#bg1)" stroke="#2a4f90" stroke-width="0.6"/><path d="M24.60 10.20 V16.80 M21.30 13.50 H27.90" stroke="#0b5a0b" stroke-width="3.4"/><path d="M24.60 11.10 V15.90 M22.20 13.50 H27.00" stroke="#5ee85e" stroke-width="1.4"/><path d="M56.50 9.00 L60.80 13.50 L58.50 13.50 L58.50 18.30 L60.80 18.30 L56.50 22.80 L52.30 18.30 L54.50 18.30 L54.50 13.50 L52.30 13.50 Z" fill="url(#bg1)" stroke="#2a4f90" stroke-width="0.6"/><path d="M64.60 8.30 V14.90 M61.30 11.60 H67.90" stroke="#0b5a0b" stroke-width="3.4"/><path d="M64.60 9.20 V14.00 M62.20 11.60 H67.00" stroke="#5ee85e" stroke-width="1.4"/><rect x="61.20" y="20.20" width="6.80" height="2.60" fill="#e05a20" stroke="#8a1a08" stroke-width="0.9"/><path d="M97.30 9.00 L101.90 13.50 L99.60 13.50 L99.60 22.60 L95.00 22.60 L95.00 13.50 L92.50 13.50 Z" fill="url(#bg1)" stroke="#2a4f90" stroke-width="0.6"/><rect x="99.50" y="17.20" width="6.50" height="2.70" fill="#e05a20" stroke="#8a1a08" stroke-width="0.9"/><path d="M135.40 9.00 L139.60 13.50 L137.40 13.50 L137.40 18.30 L139.60 18.30 L135.40 22.80 L131.10 18.30 L133.50 18.30 L133.50 13.50 L131.10 13.50 Z" fill="url(#bg1)" stroke="#2a4f90" stroke-width="0.6"/><text x="140" y="20.80000000000001" font-family="Liberation Sans" font-weight="bold" font-size="10.5" fill="#222">?</text></svg>
<svg style="position:absolute;left:655px;top:226px;" width="24" height="20" viewBox="0 0 24 20"><circle cx="16.4" cy="5.8" r="3.3" fill="#fff" stroke="#6a6a6a" stroke-width="1.3"/>
<path d="M16.6 5.6 L19.5 2.2" stroke="#fafafa" stroke-width="2.2"/>
<path d="M5.6 15.8 L12.8 9.2" stroke="#d86a20" stroke-width="5.4" stroke-linecap="round"/>
<path d="M5.6 15.8 L12.8 9.2" stroke="#f7893a" stroke-width="3.6" stroke-linecap="round"/></svg>
<svg style="position:absolute;left:694px;top:226px;" width="24" height="20" viewBox="0 0 24 20"><circle cx="16.4" cy="5.8" r="3.3" fill="#fff" stroke="#4a80c0" stroke-width="1.3"/>
<path d="M16.6 5.6 L19.5 2.2" stroke="#fafafa" stroke-width="2.2"/>
<path d="M5.6 15.8 L12.8 9.2" stroke="#4a86cc" stroke-width="5" stroke-linecap="round"/>
<path d="M5.6 15.8 L12.8 9.2" stroke="#c6e4fb" stroke-width="3" stroke-linecap="round"/></svg>
<svg style="position:absolute;left:733px;top:226px;" width="24" height="20" viewBox="0 0 24 20"><circle cx="12" cy="10" r="6.8" fill="#fff4f4" stroke="#c01818" stroke-width="2.3"/>
<rect x="11.4" y="5.8" width="1.2" height="5.4" fill="#d03030"/><rect x="11.4" y="12.4" width="1.2" height="1.4" fill="#d03030"/></svg>
<svg style="position:absolute;left:772px;top:226px;" width="24" height="20" viewBox="0 0 24 20"><path d="M16.5 7.5 A5.5 5.5 0 1 0 17 12" fill="none" stroke="#40a848" stroke-width="2"/>
<path d="M13.5 3.5 L18.5 3 L18 8 Z" fill="#40a848"/></svg>
<svg style="position:absolute;left:811px;top:226px;" width="24" height="20" viewBox="0 0 24 20"><path d="M3.5 7.5 H7 L8.5 5 L10 7.5 H19.5 V15.5 H16.5 L15 18 L13.5 15.5 H3.5Z" fill="#f4f4f4" stroke="#777" stroke-width="0.9"/>
<text x="5" y="14" font-family="Liberation Sans" font-size="7.5" fill="#555">0-9</text></svg>
<svg style="position:absolute;left:850px;top:226px;" width="24" height="20" viewBox="0 0 24 20"><path d="M7 17 V4" stroke="#e89070" stroke-width="1.2"/><path d="M4.5 7 L7 2.5 L9.5 7Z" fill="#e08060"/>
<g fill="#222"><rect x="10" y="3.5" width="1.5" height="1.3"/><rect x="10" y="6" width="1.5" height="1.3"/><rect x="10" y="8.5" width="1.5" height="1.3"/>
<rect x="12.5" y="3.5" width="7" height="1.3"/><rect x="12.5" y="6" width="7" height="1.3"/><rect x="12.5" y="8.5" width="7" height="1.3"/></g></svg>
<svg style="position:absolute;left:889px;top:226px;" width="24" height="20" viewBox="0 0 24 20"><path d="M7 3 V15" stroke="#e0a070" stroke-width="1.2"/><path d="M4.5 13 L7 17.5 L9.5 13Z" fill="#e09060"/>
<g fill="#222"><rect x="10" y="3.5" width="1.5" height="1.3"/><rect x="12.5" y="3.5" width="7" height="1.3"/><rect x="12.5" y="6" width="7" height="1.1"/><rect x="12.5" y="8.5" width="7" height="1.1"/>
<rect x="10" y="11.5" width="1.5" height="1.3"/><rect x="12.5" y="11.5" width="7" height="1.3"/><rect x="12.5" y="14" width="7" height="1.1"/></g></svg>
<svg style="position:absolute;left:928px;top:226px;" width="24" height="20" viewBox="0 0 24 20"><text x="5" y="9.5" font-family="Liberation Sans" font-size="9" fill="#2a6ac0">A</text>
<text x="5" y="18" font-family="Liberation Sans" font-size="9" fill="#c82828">Я</text>
<path d="M14.5 3 V16" stroke="#222" stroke-width="1.6"/><path d="M11 12.5 L14.5 17.5 L18 12.5Z" fill="#222"/></svg>
<svg style="position:absolute;left:427px;top:298px;" width="11" height="11" viewBox="0 0 11 11"><rect x="1" y="1" width="9.5" height="9.5" rx="2" fill="#fff"/><path d="M4.5 3.5 L7 5.7 L4.5 8" fill="none" stroke="#aaa" stroke-width="1"/></svg>
<svg style="position:absolute;left:405px;top:537px;" width="6" height="8" viewBox="0 0 6 8"><path d="M5 0.5 L1 4 L5 7.5Z" fill="#bbb"/></svg>
<svg style="position:absolute;left:968px;top:537px;" width="6" height="8" viewBox="0 0 6 8"><path d="M1 0.5 L5 4 L1 7.5Z" fill="#333"/></svg>
<svg style="position:absolute;left:417px;top:633px;" width="18" height="16" viewBox="0 0 18 16"><rect x="1.5" y="2.5" width="12" height="9" fill="#fff" stroke="#777" stroke-width="0.9"/>
<g stroke="#555" stroke-width="0.9"><path d="M3.5 5H11.5M3.5 7.3H11.5M3.5 9.6H10"/></g>
<path d="M9.5 11 L11.8 13.3 L16 8.8" fill="none" stroke="#2aa04a" stroke-width="2"/></svg>
<svg style="position:absolute;left:417px;top:662px;" width="18" height="16" viewBox="0 0 18 16"><rect x="1.5" y="2.5" width="12" height="9" fill="#fff" stroke="#888" stroke-width="0.9"/>
<g stroke="#555" stroke-width="0.9"><path d="M3.5 5H11.5M3.5 7.3H11.5M3.5 9.6H10"/></g>
<path d="M9.5 11 L11.8 13.3 L16 8.8" fill="none" stroke="#2aa04a" stroke-width="2"/></svg>
<svg style="position:absolute;left:417px;top:691px;" width="18" height="16" viewBox="0 0 18 16"><rect x="1.5" y="2.5" width="12" height="9" fill="#fff" stroke="#888" stroke-width="0.9"/>
<g stroke="#555" stroke-width="0.9"><path d="M3.5 5H11.5M3.5 7.3H11.5M3.5 9.6H10"/></g>
<path d="M9.5 11 L11.8 13.3 L16 8.8" fill="none" stroke="#2aa04a" stroke-width="2"/></svg>
<svg style="position:absolute;left:417px;top:720px;" width="18" height="16" viewBox="0 0 18 16"><rect x="1.5" y="2.5" width="12" height="9" fill="#fff" stroke="#888" stroke-width="0.9"/>
<g stroke="#555" stroke-width="0.9"><path d="M3.5 5H11.5M3.5 7.3H11.5M3.5 9.6H10"/></g>
<path d="M9.5 11 L11.8 13.3 L16 8.8" fill="none" stroke="#2aa04a" stroke-width="2"/></svg>
</body></html>
